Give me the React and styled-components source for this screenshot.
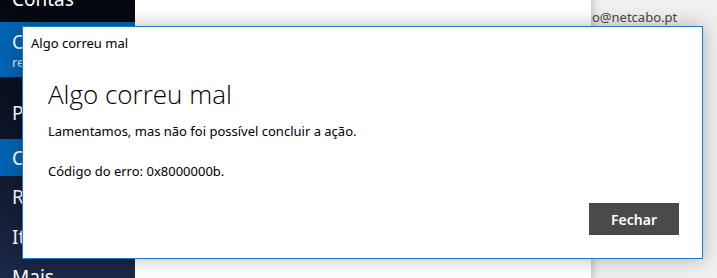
import styled, { createGlobalStyle } from "styled-components";

const GlobalStyle = createGlobalStyle`
  html, body {
    margin: 0;
    padding: 0;
    overflow: hidden;
  }
  body {
    font-family: "Noto Sans", "Open Sans", sans-serif;
  }
`;

const Screen = styled.div`
  position: relative;
  width: 717px;
  height: 278px;
  display: flex;
  overflow: hidden;
`;

const Sidebar = styled.nav`
  width: 135px;
  flex-shrink: 0;
  display: flex;
  flex-direction: column;
  overflow: hidden;
  background: linear-gradient(180deg, #04070f 0%, #0c1427 45%, #1c2846 100%);
  color: #fff;
`;

const NavItem = styled.div`
  flex-shrink: 0;
  display: flex;
  flex-direction: column;
  justify-content: ${({ $align }) => $align || "center"};
  height: ${({ $h }) => $h}px;
  padding-left: 12px;
  padding-top: ${({ $pt }) => $pt || 0}px;
  box-sizing: border-box;
  background: ${({ $active }) => ($active ? "#0063b1" : "transparent")};
  white-space: nowrap;
`;

const NavTitle = styled.span`
  font-size: 19px;
  line-height: 24px;
`;

const NavSub = styled.span`
  font-size: 13px;
  line-height: 16px;
  color: #dbe8f5;
`;

const Main = styled.main`
  width: 456px;
  flex-shrink: 0;
  background: #fff;
`;

const RightPane = styled.aside`
  flex: 1;
  background: linear-gradient(90deg, #cdcdcd 0px, #e4e4e4 4px, #f0f0f0 10px, #f0f0f0 100%);
  padding: 8px 0 0 1px;
  color: #484848;
  font-size: 13px;
  line-height: 18px;
  white-space: nowrap;
  overflow: hidden;
`;

const Dialog = styled.section`
  position: absolute;
  left: 22px;
  top: 26px;
  width: 679px;
  height: 231px;
  background: #fff;
  border: 1px solid #1979ca;
  box-shadow: 0 0 18px rgba(0, 0, 0, 0.28);
  display: flex;
  flex-direction: column;
`;

const TitleBar = styled.header`
  height: 32px;
  display: flex;
  align-items: center;
  padding-left: 8px;
  font-size: 13px;
  color: #000;
`;

const Body = styled.div`
  flex: 1;
  display: flex;
  flex-direction: column;
  padding: 18px 23px 0 25px;
`;

const Heading = styled.h1`
  margin: 0;
  font-family: "Open Sans", "Noto Sans", sans-serif;
  font-weight: 300;
  font-size: 26px;
  line-height: 34px;
  color: #000;
`;

const Text = styled.p`
  margin: ${({ $mt }) => $mt}px 0 0;
  font-size: 13px;
  line-height: 20px;
  color: #000;
`;

const Footer = styled.div`
  margin-top: auto;
  margin-bottom: 23px;
  display: flex;
  justify-content: flex-end;
`;

const Button = styled.button`
  width: 90px;
  height: 32px;
  border: none;
  background: #4a4a4a;
  color: #fff;
  font-family: "Noto Sans", sans-serif;
  font-weight: 600;
  font-size: 14px;
  padding: 0;
`;

export default function App() {
  return (
    <>
      <GlobalStyle />
      <Screen>
        <Sidebar>
          <NavItem $h={22} $align="flex-end">
            <NavTitle style={{ marginBottom: 11 }}>Contas</NavTitle>
          </NavItem>
          <NavItem $h={55} $active>
            <NavTitle>Outlook</NavTitle>
            <NavSub>registo@netcabo.pt</NavSub>
          </NavItem>
          <NavItem $h={62} $pt={24} $align="flex-start">
            <NavTitle>Pastas</NavTitle>
          </NavItem>
          <NavItem $h={37} $active>
            <NavTitle>Caixa de entrada</NavTitle>
          </NavItem>
          <NavItem $h={41}>
            <NavTitle>Rascunhos</NavTitle>
          </NavItem>
          <NavItem $h={40}>
            <NavTitle>Itens enviados</NavTitle>
          </NavItem>
          <NavItem $h={40}>
            <NavTitle>Mais</NavTitle>
          </NavItem>
        </Sidebar>
        <Main />
        <RightPane>o@netcabo.pt</RightPane>
        <Dialog>
          <TitleBar>Algo correu mal</TitleBar>
          <Body>
            <Heading>Algo correu mal</Heading>
            <Text $mt={10}>Lamentamos, mas não foi possível concluir a ação.</Text>
            <Text $mt={20}>Código do erro: 0x8000000b.</Text>
            <Footer>
              <Button>Fechar</Button>
            </Footer>
          </Body>
        </Dialog>
      </Screen>
    </>
  );
}
